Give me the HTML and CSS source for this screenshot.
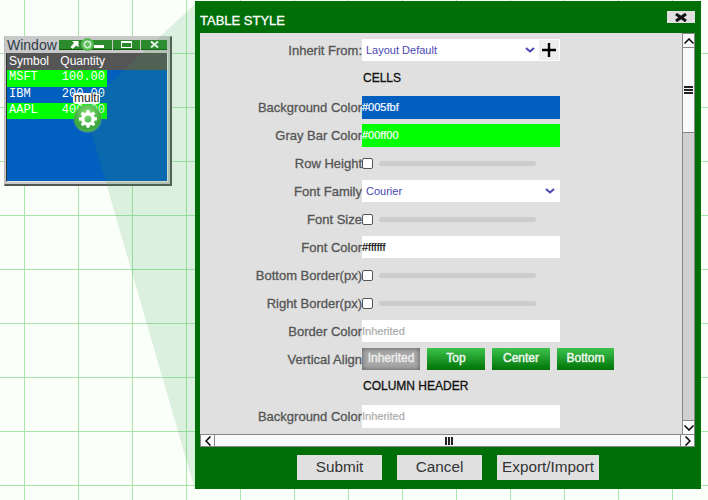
FILE: index.html
```html
<!DOCTYPE html>
<html lang="en">
<head>
<meta charset="utf-8">
<title>Table Style</title>
<link rel="stylesheet" href="styles.css">
</head>
<body>
<svg class="wedge" width="708" height="500"><polygon points="84,107 195,4 195,490" fill="#3f9f4f" fill-opacity="0.16"/></svg>

<section class="window">
  <div class="win-title">
    <span class="win-name">Window</span>
    <div class="win-btns">
      <span class="win-btn wb-a"><svg width="9" height="9" viewBox="0 0 9 9"><path d="M2 1h6.500v6.500L6.500 5.500 2.500 9 0.500 7 4 3z" fill="#fff"/></svg><i class="dash"></i></span>
      <span class="win-btn wb-b"><i class="max"></i></span>
      <span class="win-btn wb-c"><svg width="9" height="7" viewBox="0 0 9 7"><path d="M1 0.500l7 6M8 0.500l-7 6" stroke="#fff" stroke-width="2"/></svg></span>
    </div>
  </div>
  <div class="win-body">
    <div class="t-head"><span class="c1">Symbol</span><span class="c2">Quantity</span></div>
    <div class="t-row green first"><span class="c1">MSFT</span><span class="c2">100.00</span></div>
    <div class="t-row"><span class="c1">IBM</span><span class="c2">200.00</span></div>
    <div class="t-row green"><span class="c1">AAPL</span><span class="c2">400.00</span></div>
  </div>
</section>

<span class="mini-gear"></span>
<span class="multi">multi</span>
<span class="gear">
  <svg width="18" height="18" viewBox="0 0 18 18"><path fill="#fff" fill-rule="evenodd" d="M7.600 0h2.800l.4 2.400 1.500.6 2-1.400 2 2-1.400 2 .6 1.500 2.400.4v2.800l-2.400.4-.6 1.500 1.400 2-2 2-2-1.400-1.500.6-.4 2.400H7.600l-.4-2.400-1.500-.6-2 1.400-2-2 1.400-2-.6-1.500L0 10.400V7.600l2.400-.4.6-1.500-1.400-2 2-2 2 1.400 1.500-.6zM9 5.500a3.500 3.500 0 1 0 0 7 3.500 3.500 0 0 0 0-7z"/></svg>
</span>

<section class="dialog">
  <header class="d-title">
    <h1>TABLE STYLE</h1>
    <button class="d-close" type="button"><svg width="16" height="9" viewBox="0 0 16 9"><path d="M3 1l10 7M13 1L3 8" stroke="#111" stroke-width="3"/></svg></button>
  </header>
  <div class="d-panel">
    <div class="d-main">
      <div class="form">
        <div class="row r-first"><label>Inherit From:</label>
          <div class="select with-plus"><span>Layout Default</span><svg class="chev" width="10" height="6" viewBox="0 0 10 6"><path d="M1 1l4 3.500L9 1" fill="none" stroke="#4a46b0" stroke-width="2"/></svg><b class="plus"><svg width="14" height="14" viewBox="0 0 14 14"><path d="M7 0v14M0 7h14" stroke="#000" stroke-width="2.400"/></svg></b></div></div>
        <div class="row r-head"><label></label><strong>CELLS</strong></div>
        <div class="row r-gap"><label>Background Color</label><div class="input blue">#005fbf</div></div>
        <div class="row"><label>Gray Bar Color</label><div class="input lime">#00ff00</div></div>
        <div class="row"><label>Row Height</label><div class="slide"><i class="check"></i><i class="track"></i></div></div>
        <div class="row"><label>Font Family</label><div class="select"><span>Courier</span><svg class="chev" width="10" height="6" viewBox="0 0 10 6"><path d="M1 1l4 3.500L9 1" fill="none" stroke="#4a46b0" stroke-width="2"/></svg></div></div>
        <div class="row"><label>Font Size</label><div class="slide"><i class="check"></i><i class="track"></i></div></div>
        <div class="row"><label>Font Color</label><div class="input dark">#ffffff</div></div>
        <div class="row"><label>Bottom Border(px)</label><div class="slide"><i class="check"></i><i class="track"></i></div></div>
        <div class="row"><label>Right Border(px)</label><div class="slide"><i class="check"></i><i class="track"></i></div></div>
        <div class="row"><label>Border Color</label><div class="input muted">Inherited</div></div>
        <div class="row"><label>Vertical Align</label>
          <div class="aligns"><span class="al sel">Inherited</span><span class="al a-top">Top</span><span class="al a-center">Center</span><span class="al a-bottom">Bottom</span></div></div>
        <div class="row r-head2"><label></label><strong>COLUMN HEADER</strong></div>
        <div class="row r-gap2"><label>Background Color</label><div class="input muted tall">Inherited</div></div>
        <div class="row r-cut"><label></label><div class="input"></div></div>
      </div>
      <div class="vbar">
        <span class="sb-btn"><svg width="10" height="6" viewBox="0 0 10 6"><path d="M0.500 5.500L5 1l4.500 4.500" fill="none" stroke="#000" stroke-width="1.500"/></svg></span>
        <span class="v-thumb"><i></i><i></i><i></i></span>
        <span class="v-rest"></span>
        <span class="sb-btn sb-end"><svg width="10" height="6" viewBox="0 0 10 6"><path d="M0.500 0.500L5 5l4.500-4.500" fill="none" stroke="#000" stroke-width="1.500"/></svg></span>
      </div>
    </div>
    <div class="hbar">
      <span class="sb-btn h"><svg width="6" height="10" viewBox="0 0 6 10"><path d="M5.500 0.500L1 5l4.500 4.500" fill="none" stroke="#000" stroke-width="1.500"/></svg></span>
      <span class="h-thumb"><i></i><i></i><i></i></span>
      <span class="sb-btn h"><svg width="6" height="10" viewBox="0 0 6 10"><path d="M0.500 0.500L5 5 0.500 9.500" fill="none" stroke="#000" stroke-width="1.500"/></svg></span>
    </div>
  </div>
  <footer class="d-foot">
    <button class="btn" type="button">Submit</button>
    <button class="btn" type="button">Cancel</button>
    <button class="btn btn-wide" type="button">Export/Import</button>
  </footer>
</section>
</body>
</html>
```

FILE: styles.css
```css
* { box-sizing: border-box; }
html, body { margin: 0; height: 100%; overflow: hidden; }
body {
  position: relative;
  width: 708px;
  height: 500px;
  font-family: "Liberation Sans", Arial, sans-serif;
  background-color: #fafffa;
  background-image:
    linear-gradient(to right, #a9e6aa 1px, transparent 1px),
    linear-gradient(to bottom, #a9e6aa 1px, transparent 1px);
  background-size: 54px 54px;
  background-position: 24px 53px;
}

/* desktop window */
.window {
  position: absolute;
  left: 4px;
  top: 36px;
  width: 168px;
  height: 150px;
  background: #c8c8c8;
  border-right: 2px solid #555;
  border-bottom: 2px solid #555;
  border-left: 1px solid #bbb;
  border-top: 1px solid #ccc;
  padding: 2px 2px 0 1px;
}
.win-title { display: flex; align-items: center; height: 11px; justify-content: space-between; }
.win-name { font-size: 14px; color: #2f3b4a; line-height: 14px; margin: 1px 0 0 1px; }
.win-btns { display: flex; gap: 1px; height: 10px; margin-right: 1px; margin-top: 1px; }
.win-btn { display: flex; align-items: center; justify-content: center; background: #2b8a2b; border-bottom: 1px solid #0b5c0b; }
.wb-a { width: 53px; gap: 12px; padding-left: 2px; }
.wb-b { width: 27px; }
.wb-c { width: 26px; }
.dash { width: 10px; height: 3px; background: #fff; margin-top: 3px; margin-left: 3px; }
.max { width: 11px; height: 7px; border: 1px solid #fff; border-top-width: 2px; }
.win-body {
  margin-top: 3px;
  height: 129px;
  background: #005fbf;
  border-right: 1px solid #e6e6e6;
  border-bottom: 1px solid #e6e6e6;
  border-left: 1px solid #333;
  color: #fff;
}
.t-head { display: flex; height: 17px; line-height: 17px; background: #555; font-size: 12px; }
.t-row {
  display: flex;
  width: 100px;
  height: 16px;
  line-height: 15px;
  font-family: "Liberation Mono", "Courier New", monospace;
  font-size: 12px;
}
.t-row.first { height: 17px; }
.t-row.green { background: #00ff00; }
.c1 { width: 50px; padding-left: 2px; }
.c2 { width: 50px; padding-right: 2px; text-align: right; white-space: nowrap; }

.wedge { position: absolute; left: 0; top: 0; z-index: 2; pointer-events: none; }

.mini-gear {
  position: absolute; z-index: 3;
  left: 81px; top: 38px; width: 13px; height: 13px; border-radius: 50%;
  background: radial-gradient(circle, #5fc05f 0 2px, #cfeccf 2.500px 3.500px, #55bb55 4.500px 100%);
}
.multi {
  position: absolute; z-index: 4;
  left: 73px; top: 93px; height: 11px; line-height: 10px; padding: 0 1px;
  background: #fff; border-radius: 3px; font-size: 12px; color: #222;
}
.gear {
  position: absolute; z-index: 3;
  left: 74px; top: 105px; width: 27px; height: 27px; border-radius: 50%;
  display: flex; align-items: center; justify-content: center;
  background: radial-gradient(circle at 50% 30%, #88e078, #3aa53a 65%, #6fc96f 100%);
  box-shadow: 0 0 2px #9a9;
}

/* dialog */
.dialog {
  position: absolute;
  z-index: 5;
  left: 195px;
  top: 1px;
  width: 506px;
  height: 488px;
  background: #006f07;
  display: flex;
  flex-direction: column;
  padding: 0 6px 0 5px;
}
.d-title { height: 32px; display: flex; justify-content: space-between; align-items: flex-start; flex: none; }
.d-title h1 { margin: 13px 0 0; font-size: 13px; line-height: 14px; font-weight: 400; color: #fff; -webkit-text-stroke: 0.3px #fff; }
.d-close { margin: 10px 0 0; width: 28px; height: 12px; padding: 0; border: 0; background: #e0e0e0; display: flex; align-items: center; justify-content: center; }
.d-panel { height: 414px; flex: none; background: #e0e0e0; display: flex; flex-direction: column; }
.d-main { flex: 1; min-height: 0; display: flex; }
.form { flex: 1; min-width: 0; overflow: hidden; }

.row { display: flex; align-items: center; height: 28px; }
.row label {
  width: 162px; flex: none; text-align: right; font-size: 13px; color: #555;
  -webkit-text-stroke: 0.3px #555; white-space: nowrap;
}
.r-first { margin-top: 3px; }
.r-head { height: 28px; }
.r-head strong, .r-head2 strong { font-size: 12px; font-weight: 400; color: #111; -webkit-text-stroke: 0.3px #111; padding-left: 1px; }
.r-gap { margin-top: 1px; }
.r-head2 { height: 26px; }
.r-gap2 { margin-top: 3px; }
.r-cut { margin-top: 3px; }

.input, .select { width: 198px; background: #fff; font-size: 11px; display: flex; align-items: center; }
.input { height: 22px; -webkit-text-stroke: 0.2px currentColor; }
.blue { background: #005fbf; color: #fff; height: 23px; }
.lime { background: #00ff00; color: #fff; height: 23px; }
.tall { height: 23px; }
.dark { color: #111; }
.muted { color: #aaa; }
.select { position: relative; color: #4a46b0; padding-left: 4px; justify-content: space-between; padding-right: 5px; height: 22px; }
.with-plus { padding-right: 25px; }
.chev { flex: none; }
.plus { position: absolute; right: 1px; top: 1px; width: 20px; height: 20px; background: #eee; display: flex; align-items: center; justify-content: center; }

.slide { display: flex; align-items: center; width: 198px; }
.check { width: 11px; height: 11px; background: #fff; border: 1px solid #555; border-radius: 2px; flex: none; }
.track { margin-left: 6px; width: 157px; height: 5px; border-radius: 3px; background: #ccc; }

.aligns { display: flex; gap: 7px; }
.al { height: 22px; line-height: 21px; width: 58px; text-align: center; font-size: 12px; color: #f2f8f2; -webkit-text-stroke: 0.4px #f2f8f2; background: linear-gradient(#3cc34c, #007307); }
.al.sel { color: #eee; -webkit-text-stroke: 0.4px #eee; background: #a8a8a8; box-shadow: inset 0 0 5px #555; }
.a-bottom { width: 57px; }

/* scrollbars */
.vbar { width: 13px; flex: none; display: flex; flex-direction: column; background: #d0d0d0; border-left: 1px solid #888; border-right: 1px solid #888; }
.sb-btn { flex: none; height: 15px; display: flex; align-items: center; justify-content: center; background: #fafafa; border-top: 1px solid #888; border-bottom: 1px solid #888; }
.sb-end { border-bottom: 0; height: 14px; }
.v-thumb { height: 85px; flex: none; background: #fafafa; display: flex; flex-direction: column; align-items: center; justify-content: center; gap: 1px; border-bottom: 1px solid #888; }
.v-thumb i { width: 9px; height: 2px; background: #222; }
.v-rest { flex: 1; }
.hbar { height: 13px; flex: none; display: flex; background: #fafafa; border: 1px solid #888; }
.sb-btn.h { width: 14px; height: 11px; border: 0; border-right: 1px solid #888; background: #fafafa; }
.sb-btn.h:last-child { border-right: 0; border-left: 1px solid #888; }
.h-thumb { flex: 1; display: flex; justify-content: center; align-items: center; gap: 1px; padding-left: 2px; }
.h-thumb i { width: 2px; height: 8px; background: #222; }

/* footer */
.d-foot { flex: none; display: flex; gap: 15px; padding: 8px 0 0 97px; }
.btn { width: 85px; height: 25px; padding: 0 0 2px; border: 0; background: #e0e0e0; color: #333; font-family: inherit; font-size: 15.3px; }
.btn-wide { width: 102px; }
```
